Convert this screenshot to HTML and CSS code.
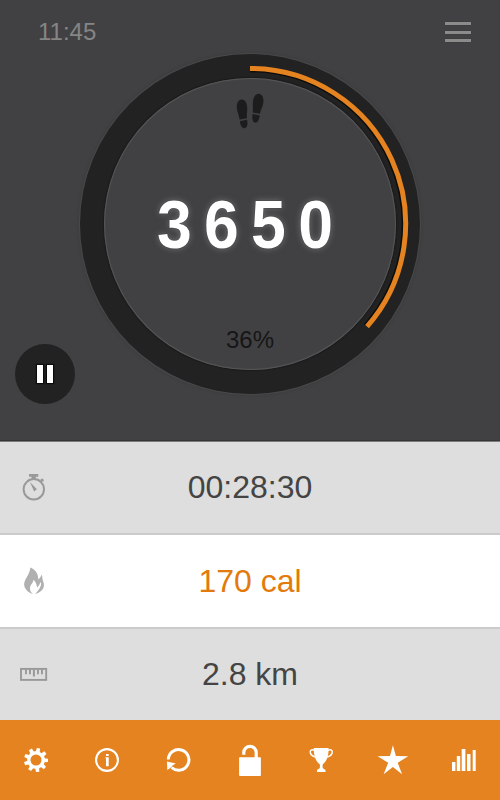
FILE: index.html
```html
<!DOCTYPE html>
<html lang="en">
<head>
    <meta charset="UTF-8">
    <meta name="viewport" content="width=device-width, initial-scale=1.0">
    <title>Pedometer</title>
    <link rel="stylesheet" href="styles.css">
</head>
<body>
    <div id="app">
        <section class="dashboard">
            <header class="top-bar">
                <span class="clock">11:45</span>
                <button class="menu-button" aria-label="Menu">
                    <span></span>
                    <span></span>
                    <span></span>
                </button>
            </header>

            <div class="dial">
                <!-- Progress arc -->
                <svg class="progress" viewBox="0 0 340 340">
                    <path class="arc-shadow" d="M170 15.500A154.500 154.500 0 0 1 286 272"/>
                    <path class="arc" d="M170 14.500A155.500 155.500 0 0 1 287 272.600"/>
                </svg>
                <div class="dial-face">
                    <svg class="steps-icon" viewBox="0 0 28 36">
                        <path d="M5.600 6.500C8.800 6.300 10.900 9.500 11.200 14C11.400 18 10.600 21 10.900 25.200L3.600 26.600C3.100 22 1.100 19 .8 14.500C.6 10 2.400 6.800 5.600 6.500ZM3.900 28.300L11 26.800C12 30.500 11.600 34.600 8.700 35.200C5.500 35.600 4.300 31.600 3.900 28.300Z"/>
                        <path d="M23 .8C19.800.6 17.500 3.700 17 8C16.500 12.200 17.300 15.500 16.600 19.400L24 20.800C24.600 16.600 27 13.500 27.400 9C27.700 4.700 26 1.200 23 .8ZM23.700 22.500L16.500 21C16 24.600 16.200 29.100 18.900 29.600C22 30.100 23.400 25.900 23.700 22.500Z"/>
                    </svg>
                    <div class="step-count">3650</div>
                    <div class="percent">36%</div>
                </div>
            </div>

            <button class="pause-button" aria-label="Pause">
                <span></span>
                <span></span>
            </button>
        </section>

        <section class="stats">
            <div class="stat time">
                <svg class="stat-icon" viewBox="0 0 28 28">
                    <circle cx="13.800" cy="16.300" r="10.200" fill="none" stroke="currentColor" stroke-width="2"/>
                    <path d="M9 1H18.300V3.800H15.800V6H11.600V3.800H9ZM19.600 8.300L21 6.900L20.300 6.300L22.500 5.500L23.900 7L23.300 8.800L22.500 8.200L21.100 9.700ZM10 9L16.900 16.300L14.100 18.500Z"/>
                </svg>
                <span>00:28:30</span>
            </div>
            <div class="stat calories">
                <svg class="stat-icon" viewBox="0 0 28 28">
                    <path d="M10.400.5C14.800 2.500 18.400 6 18.300 12.500C20.200 11.200 20.800 9.500 21.600 7.600C22.700 9.800 22 12.200 23.300 14.700C25.600 20.500 22 24.800 15.300 27C18.700 23.200 22 19 20.900 15C19.300 17 19.200 19 17.200 20.500C16.600 17.200 15.800 14.800 13.600 12.700C13.300 15.800 10.500 17.200 10 21C9.800 23.500 11 25.500 13 27.100C7 25.200 3.500 20.500 4.200 16.300C5 11.500 9.600 7.800 10.400.5Z"/>
                </svg>
                <span>170 cal</span>
            </div>
            <div class="stat distance">
                <svg class="stat-icon" viewBox="0 0 28 28">
                    <rect x="1" y="8.900" width="25.200" height="11" fill="none" stroke="currentColor" stroke-width="1.900"/>
                    <path d="M5 9H6.900V14.200H5ZM9 9H10.900V14.200H9ZM12.900 9H14.900V16.500H12.900ZM17 9H18.900V14.200H17ZM21 9H22.900V14.200H21Z"/>
                </svg>
                <span>2.8 km</span>
            </div>
        </section>

        <nav class="bottom-nav">
            <!-- Settings -->
            <a><svg viewBox="0 0 32 32">
                <circle cx="16" cy="16" r="7.200" fill="none" stroke="#fff" stroke-width="3.400"/>
                <g transform="rotate(12 16 16)">
                    <path id="tooth" d="M14.300 4H17.700L18 8.500H14Z"/>
                    <use href="#tooth" transform="rotate(40 16 16)"/>
                    <use href="#tooth" transform="rotate(80 16 16)"/>
                    <use href="#tooth" transform="rotate(120 16 16)"/>
                    <use href="#tooth" transform="rotate(160 16 16)"/>
                    <use href="#tooth" transform="rotate(200 16 16)"/>
                    <use href="#tooth" transform="rotate(240 16 16)"/>
                    <use href="#tooth" transform="rotate(280 16 16)"/>
                    <use href="#tooth" transform="rotate(320 16 16)"/>
                </g>
            </svg></a>
            <!-- Info -->
            <a><svg viewBox="0 0 32 32">
                <circle cx="16" cy="16" r="10.900" fill="none" stroke="#fff" stroke-width="2.100"/>
                <path d="M15 9.900H17.700V11.900H15ZM14.300 13.300H17.700V22.200H15V14.200H14.300Z"/>
            </svg></a>
            <!-- Reset -->
            <a><svg viewBox="0 0 32 32">
                <path d="M5.300 15.500A10.300 10.300 0 1 1 8.600 23.500" fill="none" stroke="#fff" stroke-width="3"/>
                <path d="M4 17.600L12.800 19.600L9.500 21.600L8.300 23.200L4.300 26Z"/>
            </svg></a>
            <!-- Lock -->
            <a><svg viewBox="0 0 32 32">
                <path d="M9.800 10.800V8.600A6.200 6.200 0 0 1 22.200 8.600V14" fill="none" stroke="#fff" stroke-width="3.200"/>
                <rect x="5.100" y="13.200" width="21.800" height="18.800" rx=".8"/>
            </svg></a>
            <!-- Trophy -->
            <a><svg viewBox="0 0 32 32">
                <path d="M8.800 4H23.600C23.700 11 22.500 16.500 17.600 20.500V23.500C18 25.400 20 25 20.500 26V28H12V26C12.500 25 14.500 25.400 14.900 23.500V20.500C10 16.500 8.700 11 8.800 4Z"/>
                <path d="M10 6.600C6.500 5 4.600 6.200 5.400 9C6.100 11.300 8.200 12.600 11.200 13.400M22.500 6.600C26 5 27.900 6.200 27.100 9C26.400 11.300 24.300 12.600 21.300 13.400" fill="none" stroke="#fff" stroke-width="1.500"/>
            </svg></a>
            <!-- Star -->
            <a><svg viewBox="0 0 32 32">
                <path d="M15.900 1.200L18.900 11.900L31.200 12.300L20.700 18.700L25.100 30.300L15.900 23.100L6.600 30.300L11.200 18.700L.6 12.300L13 11.900Z"/>
            </svg></a>
            <!-- Statistics -->
            <a><svg viewBox="0 0 32 32">
                <path d="M4 18H7.400V27H4ZM8.800 12H12.200V27H8.800ZM13.700 5H17.400V27H13.700ZM19 10H22.500V27H19ZM24.700 6H27.700V27H24.700Z"/>
            </svg></a>
        </nav>
    </div>
</body>
</html>
```
FILE: styles.css
```css
* {
    box-sizing: border-box;
}

body {
    margin: 0;
    font-family: 'Liberation Sans', Arial, sans-serif;
    background-color: #dedede;
}

button {
    border: none;
    padding: 0;
    cursor: pointer;
}

#app {
    display: flex;
    flex-direction: column;
    width: 500px;
    height: 800px;
    overflow: hidden;
}

.dashboard {
    position: relative;
    height: 442px;
    background-color: #414143;
    border-bottom: 1px solid #7b7b7b;
    box-shadow: inset 0 -1px 0 #353537;
}

.top-bar {
    display: flex;
    justify-content: space-between;
    height: 54px;
    padding: 18px 29px 0 38px;
}

.clock {
    font-size: 24px;
    line-height: 28px;
    color: #858585;
}

.menu-button {
    display: flex;
    flex-direction: column;
    justify-content: space-between;
    width: 26px;
    height: 20px;
    margin-top: 4px;
    background: none;
}

.menu-button span {
    width: 26px;
    height: 3px;
    background-color: #8b8b8b;
    box-shadow: 0 0 1px #2c2c2c;
}

.dial {
    position: relative;
    display: flex;
    width: 340px;
    height: 340px;
    margin: 0 auto;
    padding: 24px;
    border-radius: 50%;
    background-color: #222;
    box-shadow: 0 0 1px 1px #4b4b4d, 0 0 3px 1px #39393b;
}

.progress {
    position: absolute;
    top: 0;
    left: 0;
    width: 340px;
    height: 340px;
    fill: none;
}

.arc {
    stroke: #e58321;
    stroke-width: 5;
}

.arc-shadow {
    stroke: #0c0c0c;
    stroke-width: 5.6;
}

.dial-face {
    display: flex;
    flex-direction: column;
    align-items: center;
    width: 292px;
    height: 292px;
    border-radius: 50%;
    background-color: #414143;
    box-shadow: inset 0 0 1px 1px #58585a, 0 0 2px 0 #080808;
}

.steps-icon {
    width: 28px;
    height: 36px;
    margin-top: 15px;
    fill: #1c1c1c;
}

.step-count {
    margin-top: 57px;
    padding-left: 3px;
    font-size: 68px;
    line-height: 76px;
    font-weight: bold;
    letter-spacing: 13.3px;
    /* slightly condensed digits */
    transform: scaleX(0.92);
    color: #fff;
    text-shadow: 0 0 1px #000, 0 0 7px #77777a;
}

.percent {
    margin-top: 64px;
    font-size: 24px;
    line-height: 28px;
    color: #161616;
}

.pause-button {
    position: absolute;
    left: 15px;
    bottom: 37px;
    display: flex;
    justify-content: center;
    align-items: center;
    gap: 4px;
    width: 60px;
    height: 60px;
    border-radius: 50%;
    background-color: #222;
}

.pause-button span {
    width: 6px;
    height: 18px;
    background-color: #fff;
    box-shadow: 0 0 1px 1px #0b0b0b;
}

.stats {
    height: 278px;
}

.stat {
    display: grid;
    grid-template-columns: 60px 1fr 60px;
    align-items: center;
    background-color: #dedede;
    font-size: 32px;
    line-height: 36px;
    text-align: center;
    color: #444;
}

.time {
    height: 93px;
    padding-bottom: 1px;
    border-bottom: 2px solid #cbcbcb;
}

.calories {
    height: 94px;
    border-bottom: 2px solid #cbcbcb;
    background-color: #fff;
    color: #e27a0c;
}

.distance {
    height: 91px;
    padding-bottom: 2px;
}

.stat-icon {
    width: 28px;
    height: 28px;
    margin-left: 20px;
    color: #999;
    fill: currentColor;
}

.calories .stat-icon {
    color: #b0b0b0;
}

.bottom-nav {
    display: grid;
    grid-template-columns: repeat(7, 1fr);
    height: 80px;
    background-color: #e58321;
}

.bottom-nav a {
    display: flex;
    justify-content: center;
    align-items: center;
}

.bottom-nav svg {
    width: 32px;
    height: 32px;
    fill: #fff;
}
```
